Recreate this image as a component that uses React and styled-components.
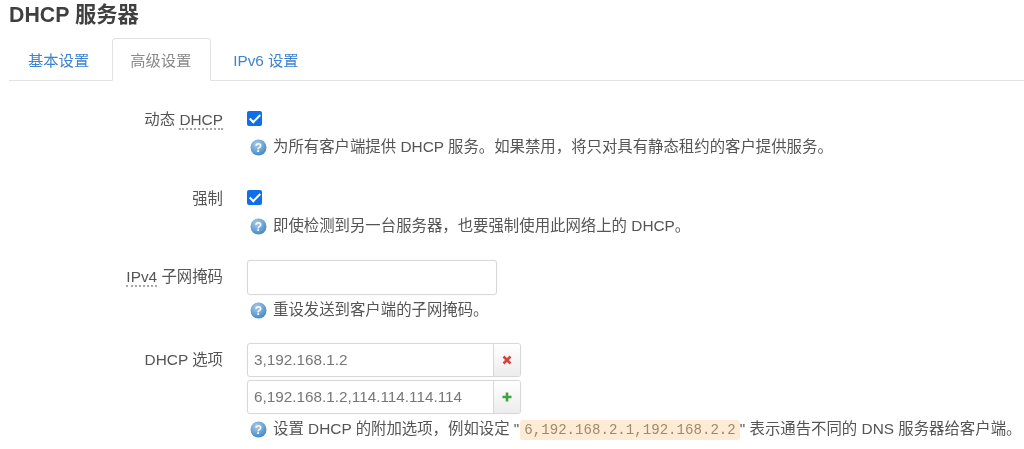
import styled, { createGlobalStyle } from "styled-components";

const GlobalStyle = createGlobalStyle`
  html, body {
    margin: 0;
    padding: 0;
    background: #fff;
  }
  body {
    font-family: "Liberation Sans", "Noto Sans CJK SC", sans-serif;
    color: #404040;
  }
`;

function HelpIcon() {
  return (
    <svg width="17" height="17" viewBox="0 0 17 17">
      <defs>
        <radialGradient id="helpBall" cx="40%" cy="30%" r="75%">
          <stop offset="0%" stopColor="#a9cdea" />
          <stop offset="100%" stopColor="#3f85c4" />
        </radialGradient>
      </defs>
      <circle cx="8.5" cy="8.5" r="8" fill="url(#helpBall)" />
      <text x="8.5" y="12.8" fontSize="12" fontWeight="700" textAnchor="middle" fill="#fff" fontFamily="Liberation Sans">
        ?
      </text>
    </svg>
  );
}

function RemoveIcon() {
  return (
    <svg width="10" height="10" viewBox="0 0 10 10">
      <path d="M1.5 1.5 L8.5 8.5 M8.5 1.5 L1.5 8.5" stroke="#d9403c" strokeWidth="2.6" />
    </svg>
  );
}

function AddIcon() {
  return (
    <svg width="10" height="10" viewBox="0 0 10 10">
      <path d="M5 .5 V9.5 M.5 5 H9.5" stroke="#3fa33f" strokeWidth="2.6" />
    </svg>
  );
}

function App() {
  return (
    <Page>
      <GlobalStyle />
      <Title>DHCP 服务器</Title>
      <Tabs>
        <Tab>基本设置</Tab>
        <Tab $active>高级设置</Tab>
        <Tab>IPv6 设置</Tab>
      </Tabs>

      <Row $top={30} $height={79}>
        <Label>
          动态 <Abbr>DHCP</Abbr>
        </Label>
        <div>
          <Check>
            <CheckMark />
          </Check>
          <Help>
            <HelpIcon />
            <span>为所有客户端提供 DHCP 服务。如果禁用，将只对具有静态租约的客户提供服务。</span>
          </Help>
        </div>
      </Row>

      <Row $height={70}>
        <Label>强制</Label>
        <div>
          <Check>
            <CheckMark />
          </Check>
          <Help>
            <HelpIcon />
            <span>即使检测到另一台服务器，也要强制使用此网络上的 DHCP。</span>
          </Help>
        </div>
      </Row>

      <Row $height={83}>
        <Label $input>
          <Abbr>IPv4</Abbr> 子网掩码
        </Label>
        <div>
          <TextInput />
          <Help $input>
            <HelpIcon />
            <span>重设发送到客户端的子网掩码。</span>
          </Help>
        </div>
      </Row>

      <Row>
        <Label $input>DHCP 选项</Label>
        <div>
          <InputGroup>
            <GroupText>3,192.168.1.2</GroupText>
            <GroupButton>
              <RemoveIcon />
            </GroupButton>
          </InputGroup>
          <InputGroup>
            <GroupText>6,192.168.1.2,114.114.114.114</GroupText>
            <GroupButton>
              <AddIcon />
            </GroupButton>
          </InputGroup>
          <Help $input>
            <HelpIcon />
            <span>
              设置 DHCP 的附加选项，例如设定 "<Code>6,192.168.2.1,192.168.2.2</Code>" 表示通告不同的 DNS 服务器给客户端。
            </span>
          </Help>
        </div>
      </Row>
    </Page>
  );
}

const Page = styled.div`
  width: 1024px;
  height: 449px;
  overflow: hidden;
  background: #fff;
  filter: blur(0.5px);
`;

const Title = styled.h2`
  margin: 0;
  padding: 2px 0 0 9px;
  height: 38px;
  box-sizing: border-box;
  font-size: 21.3px;
  line-height: 26px;
  font-weight: 700;
  color: #404040;
`;

const Tabs = styled.div`
  display: flex;
  height: 43px;
  box-sizing: border-box;
  margin-left: 9px;
  border-bottom: 1px solid #e2e2e2;
`;

const Tab = styled.div`
  height: 43px;
  box-sizing: border-box;
  padding: 0 18px 0 ${(p) => (p.$active ? "17px" : "18px")};
  width: ${(p) => (p.$active ? "99px" : "auto")};
  margin-right: 3px;
  margin-left: ${(p) => (p.$active ? "1px" : "0")};
  font-size: 15.3px;
  line-height: 43px;
  color: ${(p) => (p.$active ? "#8a8a8a" : "#3f82cf")};
  background: ${(p) => (p.$active ? "#fff" : "transparent")};
  border: 1px solid ${(p) => (p.$active ? "#e2e2e2" : "transparent")};
  border-bottom-color: ${(p) => (p.$active ? "#fff" : "transparent")};
  border-radius: 4px 4px 0 0;
`;

const Row = styled.div`
  display: grid;
  grid-template-columns: 223px 1fr;
  column-gap: 24px;
  margin-top: ${(p) => p.$top || 0}px;
  height: ${(p) => (p.$height ? `${p.$height}px` : "auto")};
`;

const Label = styled.div`
  text-align: right;
  font-size: 15.4px;
  line-height: 18px;
  color: #555;
  padding-top: ${(p) => (p.$input ? "8px" : "0")};
`;

const Abbr = styled.span`
  border-bottom: 2px dotted #a8a8a8;
`;

const Check = styled.div`
  display: flex;
  align-items: center;
  justify-content: center;
  width: 15px;
  height: 15px;
  box-sizing: border-box;
  border-radius: 2px;
  background: #0f6fe8;
`;

const CheckMark = styled.span`
  width: 6px;
  height: 11px;
  margin-top: -2px;
  box-sizing: border-box;
  border: solid #fff;
  border-width: 0 2px 2px 0;
  transform: rotate(45deg);
`;

const Help = styled.div`
  display: flex;
  align-items: center;
  gap: 6px;
  margin: ${(p) => (p.$input ? "5px" : "11px")} 0 0 3px;
  font-size: 15.4px;
  line-height: 20px;
  color: #555;
  white-space: nowrap;
`;

const TextInput = styled.div`
  width: 250px;
  height: 35px;
  box-sizing: border-box;
  border: 1px solid #d8d8d8;
  box-shadow: 0 0 1px #ddd;
  border-radius: 3px;
`;

const InputGroup = styled.div`
  display: flex;
  width: 274px;
  height: 34px;
  box-sizing: border-box;
  border: 1px solid #d8d8d8;
  box-shadow: 0 0 1px #ddd;
  border-radius: 3px;
  margin-bottom: 3px;
  overflow: hidden;
`;

const GroupText = styled.div`
  flex: 1;
  padding-left: 6px;
  font-size: 15.3px;
  line-height: 32px;
  color: #777;
`;

const GroupButton = styled.div`
  display: flex;
  align-items: center;
  justify-content: center;
  width: 26px;
  border-left: 1px solid #d8d8d8;
  background: linear-gradient(#fff, #ececec);
`;

const Code = styled.code`
  font-family: "Liberation Mono", monospace;
  font-size: 14.1px;
  color: #a08a6c;
  background: #fdebd5;
  border-radius: 3px;
  margin-left: 1px;
  padding: 2px 4px;
`;

export default App;
